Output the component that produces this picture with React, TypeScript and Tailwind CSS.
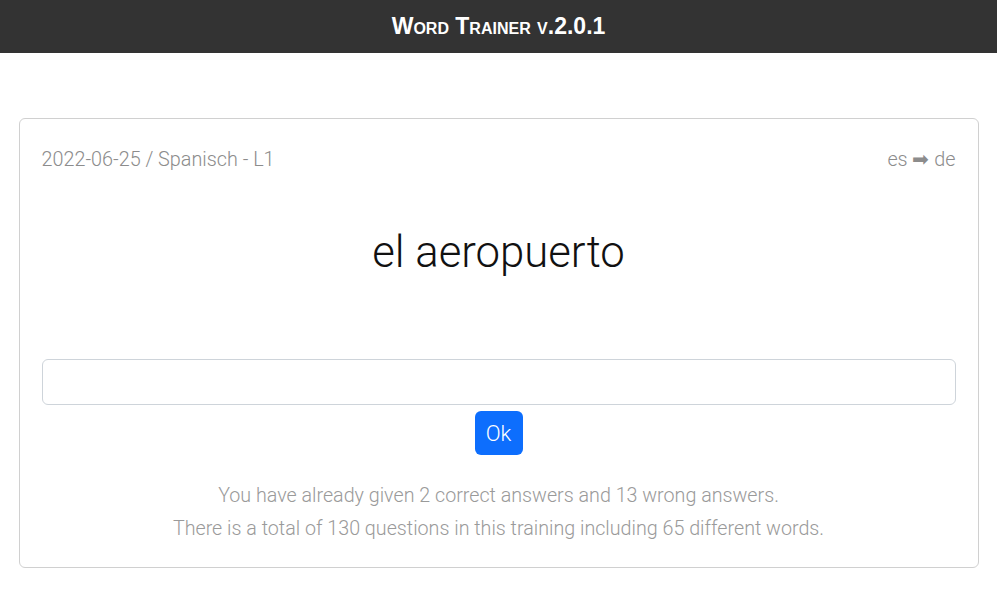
export default function App() {
  return (
    <div className="min-h-screen bg-white" style={{ fontFamily: 'Roboto, "Liberation Sans", sans-serif' }}>
      <header className="h-[53px] bg-[#333333] flex items-center justify-center">
        <h1 className="text-white text-[23px] font-bold [font-variant:small-caps] font-['Liberation_Sans',Arial,sans-serif]">
          Word Trainer v.2.0.1
        </h1>
      </header>

      <main className="pt-[65px]">
        <div className="w-[960px] mx-auto border border-[#d0d0d0] rounded-md px-[22px] pt-[27px] pb-[22px] font-light">
          <div className="flex justify-between text-[19.8px] leading-[27px] text-[#8c8c8c]">
            <span>2022-06-25 / Spanisch - L1</span>
            <span>es ➡ de</span>
          </div>

          <div className="mt-[54px] text-center text-[43.7px] leading-[50px] text-[#111]">el aeropuerto</div>

          <input
            type="text"
            className="mt-[82px] block w-full h-[46px] border border-[#ced4da] rounded-md px-3 text-[18px] outline-none"
          />

          <div className="mt-[6px] flex justify-center">
            <button className="w-[48px] h-[44px] rounded-md bg-[#0d6efd] text-white text-[22px] font-light">Ok</button>
          </div>

          <div className="mt-[24px] text-center text-[19.7px] leading-[33px] text-[#9a9a9a]">
            <p>You have already given 2 correct answers and 13 wrong answers.</p>
            <p>There is a total of 130 questions in this training including 65 different words.</p>
          </div>
        </div>
      </main>
    </div>
  );
}
